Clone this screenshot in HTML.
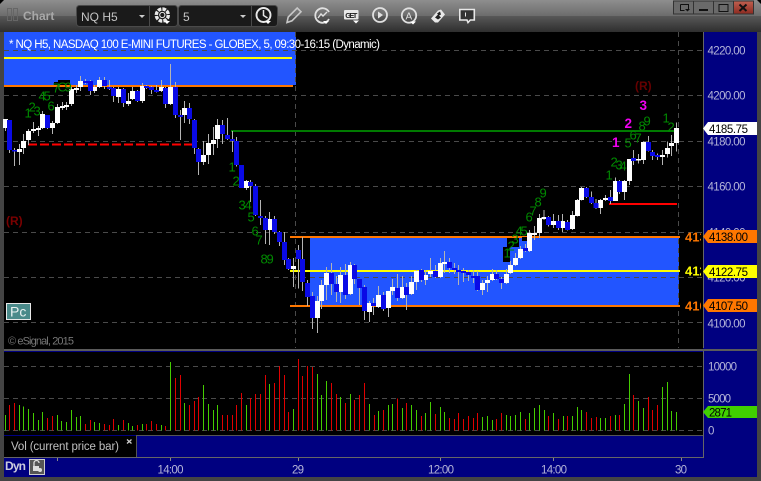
<!DOCTYPE html>
<html><head><meta charset="utf-8"><style>
html,body{margin:0;padding:0;background:#000;width:761px;height:481px;overflow:hidden}
svg{display:block}
text{font-family:"Liberation Sans",Arial,sans-serif;font-size:11.5px}
.ax{fill:#b4b4d8}.tg{fill:#000}
.g{fill:#008a00;font-size:13px}
.m{fill:#f000f0;font-size:13.5px;font-weight:bold}
</style></head><body>
<svg width="761" height="481" viewBox="0 0 761 481" xmlns="http://www.w3.org/2000/svg">
<defs>
<linearGradient id="t1" x1="0" y1="0" x2="0" y2="1"><stop offset="0" stop-color="#8e8e8e"/><stop offset="1" stop-color="#6c6c6c"/></linearGradient>
<linearGradient id="t2" x1="0" y1="0" x2="0" y2="1"><stop offset="0" stop-color="#585858"/><stop offset="1" stop-color="#2e2e2e"/></linearGradient>
<linearGradient id="rd" x1="0" y1="0" x2="0" y2="1"><stop offset="0" stop-color="#c06050"/><stop offset="1" stop-color="#8c2a20"/></linearGradient>
<clipPath id="cl"><rect x="4" y="32" width="697" height="316"/></clipPath>
</defs>
<rect width="761" height="481" fill="#444"/>
<rect y="0" width="761" height="16" fill="url(#t1)"/>
<rect y="16" width="761" height="16" fill="url(#t2)"/>
<path d="M0 0H4L0 4ZM761 0H757L761 4Z" fill="#000"/>

<!-- toolbar -->
<g fill="none" stroke="#666" stroke-width="1"><rect x="7.5" y="8.5" width="4" height="12"/><rect x="13.5" y="8.5" width="4" height="12"/></g>
<text x="23" y="20" style="font-size:12px;font-weight:bold" fill="#a8a8a8">Chart</text>
<rect x="76.5" y="5.5" width="101" height="21" rx="3" fill="#1a1a1a" stroke="#4a4a4a"/>
<path d="M149.5 6V26" stroke="#4a4a4a"/>
<text x="81" y="21" style="font-size:12px" fill="#c4c4c4">NQ H5</text>
<path d="M139 15h6l-3 3z" fill="#ccc"/>
<rect x="178.5" y="5.5" width="99" height="21" rx="3" fill="#1a1a1a" stroke="#4a4a4a"/>
<path d="M251.5 6V26" stroke="#4a4a4a"/>
<text x="183" y="21" style="font-size:12px" fill="#c4c4c4">5</text>
<path d="M240 15h6l-3 3z" fill="#ccc"/>
<circle cx="162.3" cy="15" r="6" fill="none" stroke="#e8e8e8" stroke-width="3.4" stroke-dasharray="3.6 1.1"/>
<circle cx="162.3" cy="15" r="2.6" fill="#1a1a1a" stroke="#e8e8e8" stroke-width="1"/>
<path d="M164 21h6l-3 3z" fill="#fff"/>
<circle cx="263.5" cy="15" r="7" fill="none" stroke="#e8e8e8" stroke-width="1.9"/>
<path d="M263.500 10V15.500L267.500 18" fill="none" stroke="#e8e8e8" stroke-width="1.5"/>
<path d="M265 21h6l-3 3z" fill="#fff"/>
<!-- pencil -->
<path d="M287 22.500l1.200-5.500 9-9 3.800 3.800-9 9z" fill="none" stroke="#c8c8c8" stroke-width="1.6"/>
<!-- chart refresh -->
<path d="M329 12a7.300 7.300 0 1 0 0 7" fill="none" stroke="#e0e0e0" stroke-width="1.8"/>
<path d="M318 18l3-4 2 2 4-4" fill="none" stroke="#e0e0e0" stroke-width="1.4"/>
<path d="M323 21h6l-3 3z" fill="#fff"/>
<!-- GET -->
<rect x="344" y="10" width="14.500" height="9.500" rx="1" fill="#e8e8e8"/>
<text x="345.300" y="17.800" style="font-size:7.500px;font-weight:bold" fill="#222" textLength="12">GET</text>
<path d="M353 20.500h6l-3 3z" fill="#fff"/>
<!-- play -->
<circle cx="380" cy="15" r="7" fill="none" stroke="#e0e0e0" stroke-width="1.8"/>
<path d="M378 11.500l5 3.500-5 3.500z" fill="#e0e0e0"/>
<!-- A -->
<circle cx="409" cy="15.500" r="7.200" fill="none" stroke="#e0e0e0" stroke-width="1.8"/>
<text x="405.500" y="19.500" style="font-size:10px" fill="#e0e0e0">A</text>
<path d="M410 21.500h6l-3 3z" fill="#fff"/>
<!-- diamond -->
<path d="M431 18.500l7-8 3-1 4 5-7 8-3 0z" fill="#e8e8e8"/>
<path d="M435 17.500l3-3 3 3-3 2zM437 13.500l3-2 1 3-2 1z" fill="#222"/>
<!-- note -->
<path d="M459.800 9.500h14.500v10.500h-4l-2.300 2.500-1-2.500h-7.200z" fill="#333" stroke="#e8e8e8" stroke-width="1.6"/>
<path d="M465.500 12.500v4" stroke="#e8e8e8"/>
<!-- window buttons -->
<rect x="673.500" y="1" width="60" height="13" fill="#6a6a6a" stroke="#333"/>
<rect x="733.500" y="1" width="20" height="13" fill="url(#rd)" stroke="#333"/>
<path d="M693.500 1V14M713.500 1V14" stroke="#333"/>
<path d="M680.500 4.500h8v5M680.500 4.500v6h4" fill="none" stroke="#111" stroke-width="1"/>
<path d="M685 9h5l-2.500 2.500z" fill="#111"/>
<rect x="699" y="9" width="9" height="2" fill="#111"/>
<rect x="719" y="4.500" width="9" height="7" fill="none" stroke="#111"/>
<path d="M739.500 4.500l7 6.500M746.500 4.500l-7 6.500" stroke="#111" stroke-width="2"/>

<!-- main panes -->
<rect x="4" y="32" width="753" height="445" fill="#000080"/>
<rect x="4" y="32" width="699" height="316" fill="#000"/>
<rect x="4" y="352" width="699" height="83" fill="#000"/>
<rect x="4" y="436" width="132" height="21" fill="#000"/>
<path d="M136.500 435V457M136 435.500H703" stroke="#555" shape-rendering="crispEdges"/>
<path d="M4 457.500H703M703.500 32V458" stroke="#666" shape-rendering="crispEdges"/>
<rect x="4" y="348" width="753" height="3" fill="#000"/>
<rect x="4" y="349" width="753" height="2" fill="#5a5a5a"/>
<rect x="703" y="348" width="54" height="1" fill="#000080"/>

<!-- zones -->
<rect x="4" y="32" width="292" height="53" fill="#2255ff"/>
<rect x="4" y="57" width="288" height="2" fill="#ffff00"/>
<rect x="4" y="85" width="289" height="2" fill="#ff7700"/>
<rect x="310" y="237" width="369" height="69" fill="#2255ff"/>

<!-- grid -->
<path d="M4 50.500H703M4 95.500H703M4 141.500H703M4 186.500H703M4 232.500H703M4 277.500H703M4 322.500H703M295.500 32V348M678.500 32V348M4 366.500H703M4 398.500H703M4 430.500H703" fill="none" stroke="#4a4a4a" stroke-dasharray="5 4" shape-rendering="crispEdges"/>

<rect x="290" y="236" width="390" height="2" fill="#ff7700"/>
<rect x="290" y="270" width="390" height="2" fill="#ffff00"/>
<rect x="290" y="305" width="390" height="2" fill="#ff7700"/>
<rect x="231" y="130" width="445" height="2" fill="#007a00"/>
<path d="M28 144.500H197" stroke="#ff0000" stroke-width="2" stroke-dasharray="9 3" shape-rendering="crispEdges"/>
<rect x="609" y="203" width="68" height="2" fill="#ff0000"/>
<rect x="58" y="80" width="12" height="5" fill="#000"/><rect x="54" y="82" width="5" height="3" fill="#000"/>
<rect x="503" y="247" width="7" height="15" fill="#000"/><rect x="507" y="238" width="12" height="9" fill="#000"/><rect x="522" y="237" width="5" height="4" fill="#000"/>

<!-- candles segment A -->
<g transform="translate(0 50) scale(.33333)" fill="none" shape-rendering="crispEdges">
<path stroke="#b4b4b4" stroke-width="3" d="M16 207V243M28 210V309M43 294V348M58 282V345M71 252V312M85 237V285M100 216V249M115 228V258M127 183V237M142 195V237M157 213V252M172 162V222M187 156V180M199 156V180M214 111V168M229 105V129M241 78V123M256 87V102M271 90V135M283 105V129M298 81V114M313 81V117M328 90V120M340 111V156M355 111V159M370 114V171M385 129V168M397 111V150M412 120V156M427 99V159M439 105V117M454 108V132M469 105V128M484 90V126M496 111V174M511 42V165M526 96V204M541 180V270M553 153V219M568 159V222M583 207V312M595 294V375M610 273V345M625 252V342M640 231V315M652 207V294M667 210V282M682 204V270M697 243V306M709 261V350"/>
<path stroke="#fff" stroke-width="15" d="M16 207V234M58 297V306M71 273V294M85 243V270M100 237V243M115 234V240M127 192V234M157 219V234M172 171V219M187 168V174M199 165V171M214 117V162M229 114V120M241 93V111M283 111V123M298 90V111M355 117V141M385 153V162M397 123V147M427 108V153M484 111V123M511 111V162M553 174V195M610 315V336M625 279V315M640 270V282M652 225V267"/>
<path stroke="#0a0ae6" stroke-width="15" d="M28 210V300M43 300V305M142 195V234M256 93V99M271 93V123M313 90V108M328 111V117M340 114V138M370 117V159M412 123V153M439 108V114M454 111V120M469 120V126M496 114V162M526 111V195M541 195V201M568 174V207M583 210V294M595 297V336M667 225V252M682 255V267M697 267V273M709 273V345M724 345V414"/>
</g>
<!-- candles segment B -->
<g transform="translate(0 180) scale(.33333)" fill="none" shape-rendering="crispEdges">
<path stroke="#b4b4b4" stroke-width="3" d="M739 0V30M751 0V66M766 12V108M781 60V135M796 108V192M808 96V195M823 108V162M838 153V198M853 156V255M865 234V270M880 234V321M895 195V325"/>
<path stroke="#fff" stroke-width="15" d="M739 3V24M808 117V150M880 258V267"/>
<path stroke="#0a0ae6" stroke-width="15" d="M751 6V18M766 18V105M781 108V114M796 114V150M823 117V156M838 156V186M853 186V240M865 237V267M895 210V237"/>
</g>
<!-- candles segment C -->
<g transform="translate(300 220) scale(.33333)" fill="none" shape-rendering="crispEdges">
<path stroke="#b4b4b4" stroke-width="3" d="M7 51V213M22 180V258M37 216V327M52 228V339M64 180V267M79 141V240M94 129V225M109 168V246M121 141V249M136 132V237M151 126V225M163 132V192M178 177V255M193 195V300M208 243V306M220 234V285M235 198V264M250 216V273M265 213V291M277 177V225M292 162V243M307 168V237M319 189V270M334 168V225M349 150V210M364 147V186M376 150V195M391 114V171M406 135V174M421 114V174M433 93V159M448 114V159M463 129V162M475 135V195M490 144V186M505 150V183M520 150V189M532 153V213M547 180V225M562 168V216M577 147V183M589 150V180M604 171V207M619 147V192M631 123V162M646 99V138M661 78V117M676 72V96M688 30V96M703 18V60"/>
<path stroke="#fff" stroke-width="15" d="M52 243V294M64 195V243M79 159V195M121 165V216M151 135V222M208 249V276M235 225V261M265 213V264M277 201V213M307 201V234M334 186V222M349 153V186M376 165V180M391 153V162M421 129V171M433 126V132M547 189V210M562 180V189M577 162V180M619 162V189M631 135V159M646 114V135M661 87V114M688 39V93M703 39V45"/>
<path stroke="#0a0ae6" stroke-width="15" d="M7 117V186M22 189V231M37 228V294M94 159V192M109 192V216M136 165V225M163 135V177M178 177V204M193 201V273M220 249V258M250 225V267M292 204V234M319 201V225M364 150V180M406 153V171M448 126V144M463 144V150M475 150V156M490 153V159M505 156V165M520 168V174M532 168V210M589 162V177M604 177V189M676 84V93"/>
</g>
<!-- candles segment D -->
<g transform="translate(500 70) scale(.33333)" fill="none" shape-rendering="crispEdges">
<path stroke="#b4b4b4" stroke-width="3" d="M118 432V504M132 420V450M145 438V470M160 432V474M175 435V480M188 432V486M202 450V482M217 423V480M232 387V440M245 351V392M260 351V384M274 365V402M288 387V417M302 387V432M316 375V393M331 360V402M346 322V393M358 330V372M373 330V390M388 267V345M401 240V285M416 252V280M431 214V282M445 198V245M458 240V270M472 250V270M487 240V285M502 215V262M515 195V258M529 157V245"/>
<path stroke="#fff" stroke-width="15" d="M118 444V489M132 441V447M160 453V465M188 453V474M217 435V477M232 390V438M245 354V390M302 390V414M316 384V390M346 333V393M373 333V366M388 267V333M416 267V272M431 216V270M487 255V261M502 234V252M515 219V228M529 174V219"/>
<path stroke="#0a0ae6" stroke-width="15" d="M145 441V465M175 453V474M202 456V480M260 354V381M274 381V399M288 399V414M331 381V393M358 333V366M401 264V273M445 216V243M458 246V258M472 255V261"/>
</g>

<!-- volume -->
<g transform="translate(0 345) scale(.33333)" fill="none" stroke-width="3" shape-rendering="crispEdges">
<path stroke="#44cc00" d="M16 210V256M58 180V256M71 185V256M85 192V256M100 204V256M115 225V256M127 201V256M172 210V256M185 228V256M199 231V256M214 195V256M229 216V256M241 213V256M283 231V256M298 234V256M355 240V256M385 234V256M397 243V256M427 237V256M484 240V256M511 51V256M553 174V256M610 120V256M625 177V256M640 195V256M652 180V256M739 180V256M808 117V256M880 192V256M952 87V256M964 150V256M979 108V256M1021 156V256M1051 147V256M1108 177V256M1135 198V256"/>
<path stroke="#e00000" d="M28 180V256M43 174V256M142 219V256M157 213V256M256 237V256M271 225V256M313 237V256M328 240V256M340 222V256M370 225V256M412 240V256M439 237V256M454 228V256M469 237V256M496 243V256M526 99V256M541 90V256M568 180V256M583 168V256M595 156V256M667 210V256M682 210V256M697 210V256M709 180V256M724 144V256M751 159V256M766 147V256M781 147V256M796 90V256M823 114V256M838 63V256M853 90V256M865 201V256M895 42V256M907 93V256M922 63V256M937 66V256M994 114V256M1009 147V256M1036 174V256M1063 165V256M1078 150V256M1093 114V256M1123 210V256"/>
</g>
<g transform="translate(380 345) scale(.33333)" fill="none" stroke-width="3" shape-rendering="crispEdges">
<path stroke="#44cc00" d="M25 180V256M37 177V256M67 189V256M94 180V256M109 195V256M136 204V256M151 171V256M181 186V256M193 201V256M307 216V256M322 213V256M337 225V256M379 210V256M391 213V256M406 210V256M421 201V256M448 204V256M463 189V256M478 180V256M493 195V256M520 204V256M550 213V256M577 213V256M592 186V256M604 195V256M661 219V256M676 219V256M706 210V256M733 177V256M748 87V256M775 168V256M790 189V256M847 126V256M862 111V256M874 198V256M889 201V256"/>
<path stroke="#e00000" d="M10 195V256M52 160V256M79 174V256M124 213V256M166 207V256M208 219V256M223 222V256M235 204V256M250 222V256M265 213V256M280 219V256M292 204V256M349 222V256M364 204V256M436 222V256M505 213V256M535 222V256M562 213V256M619 201V256M634 219V256M649 216V256M691 213V256M718 210V256M760 150V256M805 156V256M817 195V256M832 180V256"/>
</g>

<!-- chart text -->
<text x="9" y="48" fill="#fff" textLength="371">* NQ H5, NASDAQ 100 E-MINI FUTURES - GLOBEX, 5, 09:30-16:15 (Dynamic)</text>
<g transform="translate(-.5 .5)">
<text class="g" x="25" y="117">1</text><text class="g" x="29" y="111">2</text><text class="g" x="34" y="115">3</text><text class="g" x="39" y="100">4</text><text class="g" x="44" y="100">5</text><text class="g" x="48" y="110">6</text>
<text class="g" x="53" y="92">7</text><text class="g" x="58" y="91">C</text><text class="g" x="65" y="91">9</text>
<text class="g" x="229" y="171">1</text><text class="g" x="233" y="185">2</text><text class="g" x="239" y="209">3</text><text class="g" x="245" y="209">4</text><text class="g" x="248" y="221">5</text><text class="g" x="252" y="235">6</text><text class="g" x="256" y="244">7</text><text class="g" x="261" y="263">8</text><text class="g" x="267" y="263">9</text>
<text class="g" x="504" y="257">1</text><text class="g" x="508" y="250">2</text><text class="g" x="512" y="243">3</text><text class="g" x="516" y="235">4</text><text class="g" x="521" y="235">5</text><text class="g" x="526" y="221">6</text><text class="g" x="530" y="215">7</text><text class="g" x="535" y="206">8</text><text class="g" x="540" y="197">9</text>
<text class="g" x="606" y="179">1</text><text class="g" x="611" y="166">2</text><text class="g" x="616" y="169">3</text><text class="g" x="620" y="170">4</text><text class="g" x="625" y="147">5</text><text class="g" x="630" y="139">6</text><text class="g" x="635" y="142">7</text><text class="g" x="639" y="130">8</text><text class="g" x="644" y="125">9</text><text class="g" x="663" y="122">1</text><text class="g" x="668" y="131">2</text>
</g>
<text class="m" x="612" y="147">1</text><text class="m" x="624.500" y="128">2</text><text class="m" x="639.500" y="110">3</text>
<text x="635" y="90" style="font-size:12px;font-weight:bold" fill="#660000">(R)</text>
<text x="6" y="225" style="font-size:12px;font-weight:bold" fill="#7a0000">(R)</text>
<rect x="6.500" y="303.500" width="24" height="16" fill="#4a8a8a" stroke="#e8e8e8"/>
<text x="10" y="316.500" style="font-size:14px" fill="#e8f0f0">Pc</text>
<text x="8" y="344.500" style="font-size:11px" fill="#777" textLength="66">© eSignal, 2015</text>
<g clip-path="url(#cl)">
<text x="685" y="241.500" style="font-size:13px;font-weight:bold" fill="#ff7700">413</text>
<text x="685" y="275.500" style="font-size:13px;font-weight:bold" fill="#ffff00">412</text>
<text x="685" y="310.500" style="font-size:13px;font-weight:bold" fill="#ff7700">410</text>
</g>

<!-- price axis -->
<text class="ax" x="707.500" y="54.500" textLength="38">4220.00</text>
<text class="ax" x="707.500" y="99.500" textLength="38">4200.00</text>
<text class="ax" x="707.500" y="145.500" textLength="38">4180.00</text>
<text class="ax" x="707.500" y="190.500" textLength="38">4160.00</text>
<text class="ax" x="707.500" y="236.500" textLength="38">4140.00</text>
<text class="ax" x="707.500" y="281.500" textLength="38">4120.00</text>
<text class="ax" x="707.500" y="327.500" textLength="38">4100.00</text>
<polygon points="703,128.500 708,122 757,122 757,135 708,135" fill="#fff"/>
<text class="tg" x="709" y="133" textLength="39">4185.75</text>
<polygon points="703,236.500 708,230 757,230 757,243 708,243" fill="#ff7700"/>
<text class="tg" x="709" y="241" textLength="39">4138.00</text>
<polygon points="703,271.500 708,265 757,265 757,278 708,278" fill="#ffff00"/>
<text class="tg" x="709" y="276" textLength="39">4122.75</text>
<polygon points="703,305.500 708,299 757,299 757,312 708,312" fill="#ff7700"/>
<text class="tg" x="709" y="310" textLength="39">4107.50</text>

<text class="ax" x="708" y="370.500" textLength="29">10000</text>
<text class="ax" x="708" y="402.500" textLength="23">5000</text>
<text class="ax" x="708" y="434.500">0</text>
<polygon points="703,412 708,406 757,406 757,418 708,418" fill="#40d000"/>
<text class="tg" x="709" y="416.500" textLength="23">2871</text>

<!-- legend -->
<text x="11" y="450" style="font-size:11.500px" fill="#c0c0c0" textLength="108">Vol (current price bar)</text>
<path d="M127 439.500l4.500 4M131.500 439.500l-4.500 4" stroke="#ccc" stroke-width="1.300"/>

<!-- bottom axis -->
<path d="M57.500 458V461M170.500 458V461M298.500 458V461M440.500 458V461M553.500 458V461M681.500 458V461" stroke="#888" shape-rendering="crispEdges"/>
<text x="5" y="470" style="font-size:12px;font-weight:bold" fill="#ccd" textLength="21">Dyn</text>
<rect x="29.500" y="459.500" width="15" height="15" fill="#555" stroke="#ccc"/>
<path d="M34 466v-3a2.500 2.500 0 0 1 5 0" fill="none" stroke="#ddd" stroke-width="1.300"/>
<rect x="33" y="466" width="6" height="5" fill="#ddd"/>
<circle cx="40" cy="470" r="2" fill="#ddd"/>
<text class="ax" x="157.500" y="473.500" textLength="26">14:00</text>
<text class="ax" x="292" y="473.500" textLength="12">29</text>
<text class="ax" x="428" y="473.500" textLength="26">12:00</text>
<text class="ax" x="541" y="473.500" textLength="26">14:00</text>
<text class="ax" x="675" y="473.500" textLength="12">30</text>
</svg>
</body></html>
